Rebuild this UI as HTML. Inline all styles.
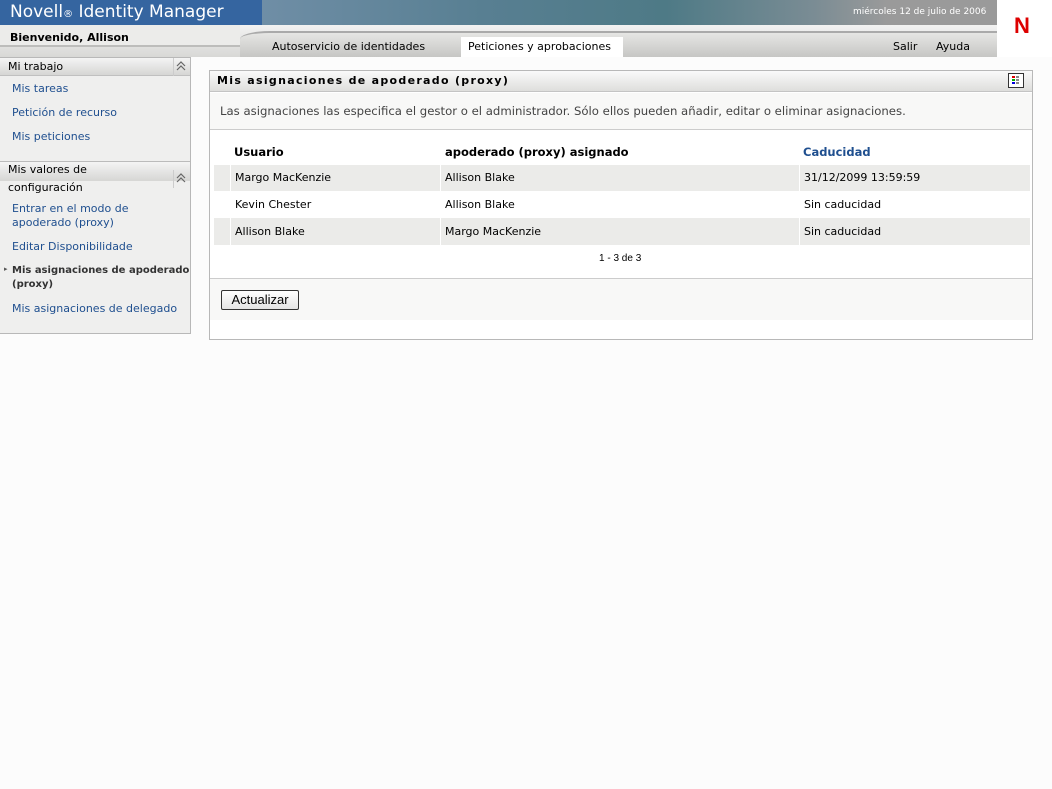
<!DOCTYPE html>
<html><head><meta charset="utf-8"><style>
*{margin:0;padding:0;box-sizing:border-box}
body{width:1052px;height:789px;background:#fcfcfc;font-family:"DejaVu Sans","Liberation Sans",sans-serif;font-size:11px;color:#000;position:relative;overflow:hidden}
.a{position:absolute;white-space:nowrap}
.lnk{color:#1f4f8f}
</style></head><body>
<div class="a" style="left:0;top:0;width:262px;height:25px;background:#3565a0"></div>
<div class="a" style="left:262px;top:0;width:735px;height:25px;background:linear-gradient(90deg,#6f8ea6,#587f92 30%,#4e7a86 55%,#7a8c94 75%,#9a9a9a 85%,#9a9a9a)"></div>
<div class="a" style="left:10px;top:2px;color:#fff;font-size:17px">Novell<span style="font-size:10px">®</span> Identity Manager</div>
<div class="a" style="left:853px;top:7px;color:#fff;font-size:9px">miércoles 12 de julio de 2006</div>
<div class="a" style="left:997px;top:0;width:55px;height:57px;background:#fff"></div>
<div class="a" style="left:1014px;top:13px;color:#d00;font:bold 22px 'Liberation Sans',sans-serif">N</div>
<div class="a" style="left:0;top:25px;width:997px;height:32px;background:linear-gradient(#f2f2f2,#d8d8d6)"></div>
<div class="a" style="left:0;top:25px;width:240px;height:22px;background:#ececea;border-bottom:2px solid #bdbdbb"></div>
<div class="a" style="left:240px;top:31px;width:757px;height:26px;background:linear-gradient(#e6e6e4,#c6c6c4);border-top:2px solid #aaa;border-top-left-radius:30px 8px"></div>
<div class="a" style="left:10px;top:31px;font-weight:bold;font-size:11px">Bienvenido, Allison</div>
<div class="a" style="left:272px;top:40px">Autoservicio de identidades</div>
<div class="a" style="left:461px;top:37px;width:162px;height:20px;background:#fff"></div>
<div class="a" style="left:468px;top:40px">Peticiones y aprobaciones</div>
<div class="a" style="left:893px;top:40px">Salir</div>
<div class="a" style="left:936px;top:40px">Ayuda</div>
<!-- sidebar -->
<div class="a" style="left:0;top:57px;width:191px;height:277px;background:#efefee;border:1px solid #b8b8b8;border-left:none"></div>
<div class="a" style="left:0;top:58px;width:190px;height:18px;background:linear-gradient(#f4f4f4,#d6d6d4);border-bottom:1px solid #c0c0c0"></div>
<div class="a" style="left:8px;top:60px">Mi trabajo</div>
<div class="a" style="left:173px;top:58px;width:1px;height:18px;background:#ccc"></div>
<svg class="a" style="left:176px;top:61px" width="10" height="10"><path d="M1 5L5 1L9 5M1 9L5 5L9 9" fill="none" stroke="#666" stroke-width="1.2"/></svg>
<div class="a lnk" style="left:12px;top:82px">Mis tareas</div>
<div class="a lnk" style="left:12px;top:106px">Petición de recurso</div>
<div class="a lnk" style="left:12px;top:130px">Mis peticiones</div>
<div class="a" style="left:0;top:161px;width:190px;height:1px;background:#bbb"></div>
<div class="a" style="left:0;top:162px;width:190px;height:19px;background:linear-gradient(#f4f4f4,#d6d6d4)"></div>
<div class="a" style="left:8px;top:163px">Mis valores de</div>
<div class="a" style="left:8px;top:181px">configuración</div>
<div class="a" style="left:173px;top:170px;width:1px;height:18px;background:#ccc"></div>
<svg class="a" style="left:176px;top:173px" width="10" height="10"><path d="M1 5L5 1L9 5M1 9L5 5L9 9" fill="none" stroke="#666" stroke-width="1.2"/></svg>
<div class="a lnk" style="left:12px;top:202px;line-height:14px">Entrar en el modo de<br>apoderado (proxy)</div>
<div class="a lnk" style="left:12px;top:240px">Editar Disponibilidade</div>
<div class="a" style="left:4px;top:265px;font-size:7px;color:#555">▸</div>
<div class="a" style="left:12px;top:264px;line-height:14px;font-weight:bold;color:#333;font-size:10px">Mis asignaciones de apoderado<br>(proxy)</div>
<div class="a lnk" style="left:12px;top:302px">Mis asignaciones de delegado</div>
<!-- panel -->
<div class="a" style="left:209px;top:70px;width:824px;height:270px;background:#fff;border:1px solid #b8b8b8"></div>
<div class="a" style="left:210px;top:71px;width:822px;height:21px;background:linear-gradient(#fafafa,#dededc);border-bottom:1px solid #c4c4c4"></div>
<div class="a" style="left:217px;top:74px;font-weight:bold;letter-spacing:1.3px;font-size:11px">Mis asignaciones de apoderado (proxy)</div>
<div class="a" style="left:1008px;top:73px;width:16px;height:15px;border:1px solid #333;background:#fff"></div>
<div class="a" style="left:1012px;top:76px;width:3px;height:2px;background:#d00;box-shadow:0 3px 0 #0a0,0 6px 0 #00d,4px 0 0 #888,4px 3px 0 #888,4px 6px 0 #888"></div>
<div class="a" style="left:210px;top:93px;width:822px;height:37px;background:#f8f8f7;border-bottom:1px solid #ccc"></div>
<div class="a" style="left:220px;top:104px;color:#444;font-size:11.7px">Las asignaciones las especifica el gestor o el administrador. Sólo ellos pueden añadir, editar o eliminar asignaciones.</div>
<div class="a" style="left:234px;top:145px;font-weight:bold;font-size:11.5px">Usuario</div>
<div class="a" style="left:445px;top:145px;font-weight:bold;font-size:11.5px">apoderado (proxy) asignado</div>
<div class="a" style="left:803px;top:145px;font-weight:bold;font-size:11.5px;color:#1f4f8f">Caducidad</div>
<div class="a" style="left:214px;top:165px;width:816px;height:26px;background:#ebebe9"></div>
<div class="a" style="left:214px;top:218px;width:816px;height:27px;background:#ebebe9"></div>
<div class="a" style="left:230px;top:165px;width:1px;height:80px;background:#fff"></div>
<div class="a" style="left:440px;top:165px;width:1px;height:80px;background:#fff"></div>
<div class="a" style="left:799px;top:165px;width:1px;height:80px;background:#fff"></div>
<div class="a" style="left:235px;top:171px">Margo MacKenzie</div><div class="a" style="left:445px;top:171px">Allison Blake</div><div class="a" style="left:804px;top:171px">31/12/2099 13:59:59</div>
<div class="a" style="left:235px;top:198px">Kevin Chester</div><div class="a" style="left:445px;top:198px">Allison Blake</div><div class="a" style="left:804px;top:198px">Sin caducidad</div>
<div class="a" style="left:235px;top:225px">Allison Blake</div><div class="a" style="left:445px;top:225px">Margo MacKenzie</div><div class="a" style="left:804px;top:225px">Sin caducidad</div>
<div class="a" style="left:599px;top:253px;font-size:10px;font-family:'Liberation Sans',sans-serif">1 - 3 de 3</div>
<div class="a" style="left:210px;top:278px;width:822px;height:42px;background:#f8f8f7;border-top:1px solid #ccc"></div>
<div class="a" style="left:221px;top:290px;width:78px;height:20px;border:1px solid #333;border-radius:2px;background:linear-gradient(#fff,#e4e4e4);font:13px 'Liberation Sans',sans-serif;text-align:center;line-height:18px">Actualizar</div>
</body></html>
